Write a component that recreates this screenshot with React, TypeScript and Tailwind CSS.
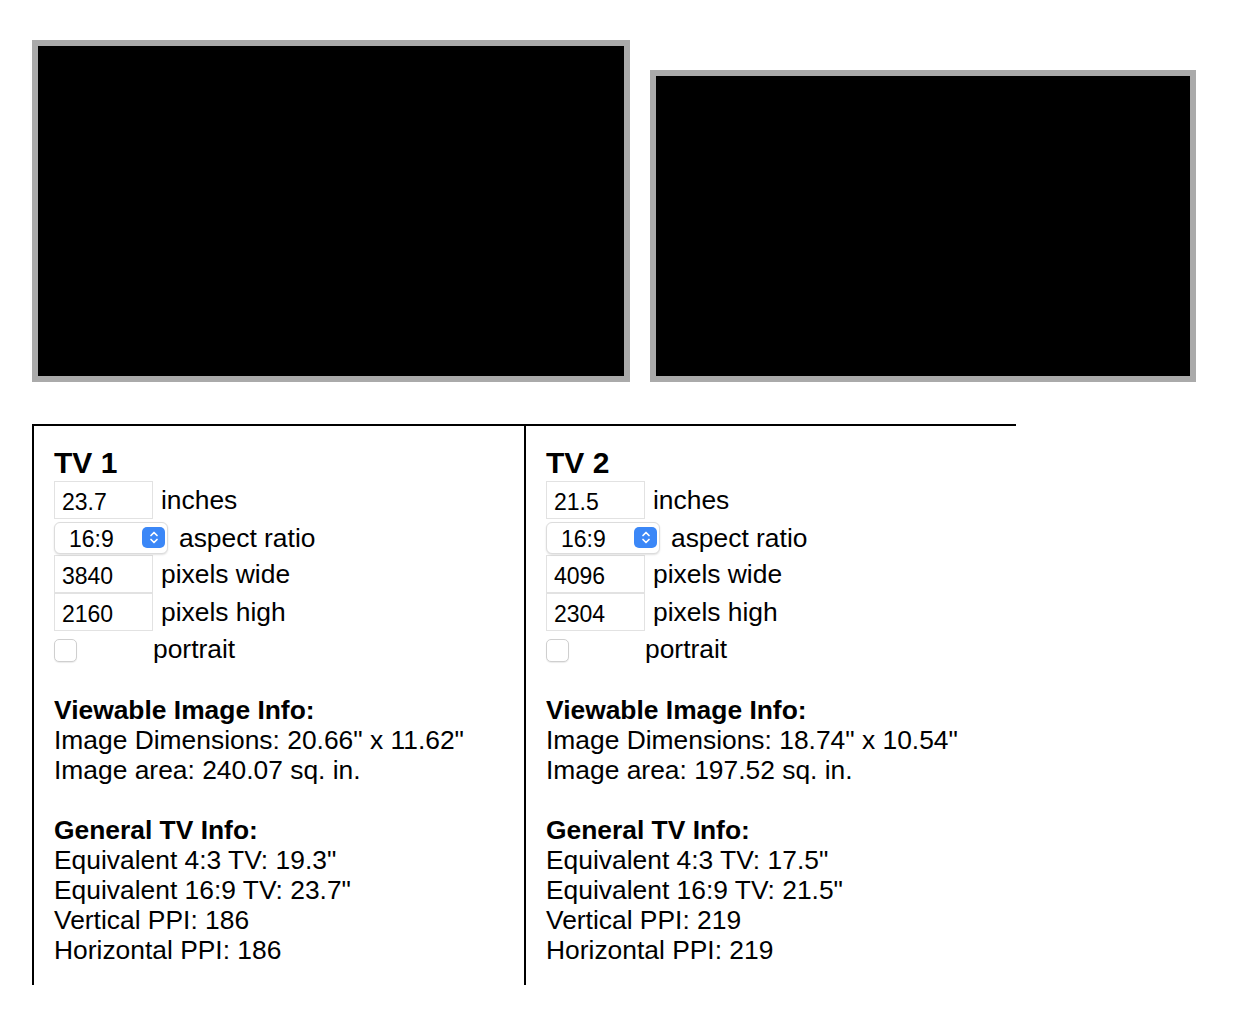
import React from "react";

type Tv = {
  name: string;
  inches: string;
  ratio: string;
  wide: string;
  high: string;
  dims: string;
  area: string;
  eq43: string;
  eq169: string;
  vppi: string;
  hppi: string;
};

const tvs: Tv[] = [
  {
    name: "TV 1",
    inches: "23.7",
    ratio: "16:9",
    wide: "3840",
    high: "2160",
    dims: `20.66" x 11.62"`,
    area: "240.07",
    eq43: `19.3"`,
    eq169: `23.7"`,
    vppi: "186",
    hppi: "186",
  },
  {
    name: "TV 2",
    inches: "21.5",
    ratio: "16:9",
    wide: "4096",
    high: "2304",
    dims: `18.74" x 10.54"`,
    area: "197.52",
    eq43: `17.5"`,
    eq169: `21.5"`,
    vppi: "219",
    hppi: "219",
  },
];

function NumberBox({ value }: { value: string }) {
  return (
    <input
      type="text"
      readOnly
      value={value}
      className="w-[99px] h-[38px] shrink-0 border border-[#e2e2e2] bg-white pl-[7px] pt-[4px] text-[23px] text-black outline-none font-['Liberation_Sans',Arial,sans-serif]"
    />
  );
}

function RatioSelect({ value }: { value: string }) {
  return (
    <div className="relative flex h-[32px] w-[114px] shrink-0 items-center rounded-[6px] border border-[#dcdcdc] bg-white pl-[14px] pt-[2px] text-[23px] shadow-[0_1px_2px_rgba(0,0,0,0.12)]">
      {value}
      <span className="absolute right-[2px] top-[4px] flex h-[21px] w-[23px] items-center justify-center rounded-[5px] bg-[#3b87f7]">
        <svg width="10" height="15" viewBox="0 0 10 15" fill="none">
          <path d="M2 5.5 L5 2.5 L8 5.5" stroke="white" strokeWidth="1.7" strokeLinecap="round" strokeLinejoin="round" />
          <path d="M2 9.5 L5 12.5 L8 9.5" stroke="white" strokeWidth="1.7" strokeLinecap="round" strokeLinejoin="round" />
        </svg>
      </span>
    </div>
  );
}

function Panel({ tv }: { tv: Tv }) {
  return (
    <div className="w-[492px] border-l-2 border-black px-[20px] py-[20px]">
      <div className="h-[35px] text-[30px] font-bold leading-[34px]">{tv.name}</div>

      <div className="flex h-[39px] items-start">
        <NumberBox value={tv.inches} />
        <span className="ml-[8px] leading-[38px]">inches</span>
      </div>
      <div className="flex h-[35px] items-start pt-[2px]">
        <RatioSelect value={tv.ratio} />
        <span className="ml-[11px] leading-[32px]">aspect ratio</span>
      </div>
      <div className="flex h-[38px] items-start">
        <NumberBox value={tv.wide} />
        <span className="ml-[8px] leading-[38px]">pixels wide</span>
      </div>
      <div className="flex h-[39px] items-start">
        <NumberBox value={tv.high} />
        <span className="ml-[8px] leading-[38px]">pixels high</span>
      </div>
      <div className="flex h-[36px] items-center">
        <div className="w-[99px] shrink-0">
          <div className="h-[23px] w-[23px] rounded-[5px] border border-[#cfcfcf] bg-white shadow-[0_1px_1px_rgba(0,0,0,0.08)]" />
        </div>
        <span>portrait</span>
      </div>

      <div className="mt-[27px] leading-[30px]">
        <div className="font-bold">Viewable Image Info:</div>
        <div>Image Dimensions: {tv.dims}</div>
        <div>Image area: {tv.area} sq. in.</div>
        <div className="h-[30px]" />
        <div className="font-bold">General TV Info:</div>
        <div>Equivalent 4:3 TV: {tv.eq43}</div>
        <div>Equivalent 16:9 TV: {tv.eq169}</div>
        <div>Vertical PPI: {tv.vppi}</div>
        <div>Horizontal PPI: {tv.hppi}</div>
      </div>
    </div>
  );
}

export default function App() {
  return (
    <div className="min-h-screen bg-white text-[26.4px] text-black font-['Liberation_Sans',Arial,sans-serif]">
      <div className="flex items-end gap-[20px] pl-[32px] pt-[40px]">
        <div className="h-[342px] w-[598px] border-[6px] border-[#aaaaaa] bg-black" />
        <div className="h-[312px] w-[546px] border-[6px] border-[#aaaaaa] bg-black" />
      </div>

      <div className="ml-[32px] mt-[42px] flex w-[984px] border-t-2 border-black">
        {tvs.map((tv) => (
          <Panel key={tv.name} tv={tv} />
        ))}
      </div>
    </div>
  );
}
